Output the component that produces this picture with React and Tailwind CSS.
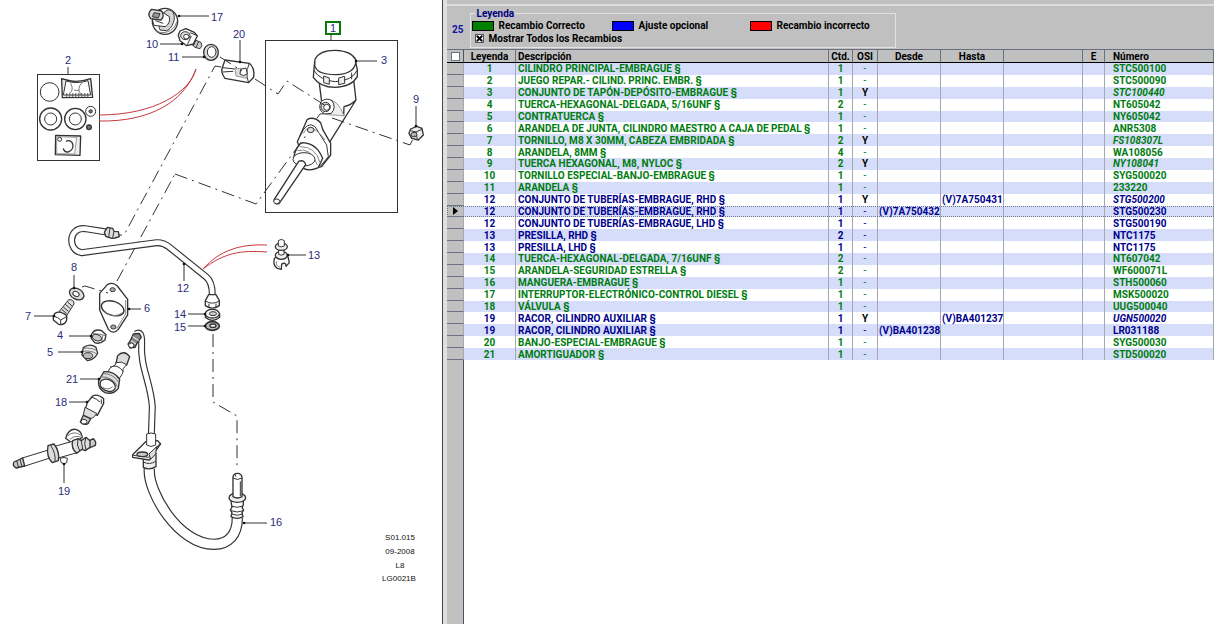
import { X } from 'lucide-react';
import clsx from 'clsx';

const parts = [
  { ref: '1', name: 'CILINDRO PRINCIPAL-EMBRAGUE §', qty: 1, number: 'STC500100' },
  { ref: '2', name: 'JUEGO REPAR.- CILIND. PRINC. EMBR. §', qty: 1, number: 'STC500090' },
  { ref: '3', name: 'CONJUNTO DE TAPÓN-DEPÓSITO-EMBRAGUE §', qty: 1, osi: true, number: 'STC100440' },
  { ref: '4', name: 'TUERCA-HEXAGONAL-DELGADA, 5/16UNF §', qty: 2, number: 'NT605042' },
  { ref: '5', name: 'CONTRATUERCA §', qty: 1, number: 'NY605042' },
  { ref: '6', name: 'ARANDELA DE JUNTA, CILINDRO MAESTRO A CAJA DE PEDAL §', qty: 1, number: 'ANR5308' },
  { ref: '7', name: 'TORNILLO, M8 X 30MM, CABEZA EMBRIDADA §', qty: 2, osi: true, number: 'FS108307L' },
  { ref: '8', name: 'ARANDELA, 8MM §', qty: 4, number: 'WA108056' },
  { ref: '9', name: 'TUERCA HEXAGONAL, M8, NYLOC §', qty: 2, osi: true, number: 'NY108041' },
  { ref: '10', name: 'TORNILLO ESPECIAL-BANJO-EMBRAGUE §', qty: 1, number: 'SYG500020' },
  { ref: '11', name: 'ARANDELA §', qty: 1, number: '233220' },
  { ref: '12', name: 'CONJUNTO DE TUBERÍAS-EMBRAGUE, RHD §', qty: 1, osi: true, to: '(V)7A750431', number: 'STG500200', optional: true },
  { ref: '12', name: 'CONJUNTO DE TUBERÍAS-EMBRAGUE, RHD §', qty: 1, from: '(V)7A750432', number: 'STG500230', optional: true, selected: true },
  { ref: '12', name: 'CONJUNTO DE TUBERÍAS-EMBRAGUE, LHD §', qty: 1, number: 'STG500190', optional: true },
  { ref: '13', name: 'PRESILLA, RHD §', qty: 2, number: 'NTC1175', optional: true },
  { ref: '13', name: 'PRESILLA, LHD §', qty: 1, number: 'NTC1175', optional: true },
  { ref: '14', name: 'TUERCA-HEXAGONAL-DELGADA, 7/16UNF §', qty: 2, number: 'NT607042' },
  { ref: '15', name: 'ARANDELA-SEGURIDAD ESTRELLA §', qty: 2, number: 'WF600071L' },
  { ref: '16', name: 'MANGUERA-EMBRAGUE §', qty: 1, number: 'STH500060' },
  { ref: '17', name: 'INTERRUPTOR-ELECTRÓNICO-CONTROL DIESEL §', qty: 1, number: 'MSK500020' },
  { ref: '18', name: 'VÁLVULA §', qty: 1, number: 'UUG500040' },
  { ref: '19', name: 'RACOR, CILINDRO AUXILIAR §', qty: 1, osi: true, to: '(V)BA401237', number: 'UGN500020', optional: true },
  { ref: '19', name: 'RACOR, CILINDRO AUXILIAR §', qty: 1, from: '(V)BA401238', number: 'LR031188', optional: true },
  { ref: '20', name: 'BANJO-ESPECIAL-EMBRAGUE §', qty: 1, number: 'SYG500030' },
  { ref: '21', name: 'AMORTIGUADOR §', qty: 1, number: 'STD500020' },
];

// label position, then the leader line from the label to the part
const callouts = [
  { n: '17', x: 211, y: 21, line: [209, 16, 179, 16] },
  { n: '10', x: 146, y: 48, line: [160, 44, 182, 44] },
  { n: '11', x: 168, y: 61, line: [182, 57, 204, 57] },
  { n: '20', x: 233, y: 38, line: [240, 40, 240, 62] },
  { n: '2', x: 65, y: 64, line: [68, 67, 68, 74], plain: true },
  { n: '1', x: 330, y: 32, line: [331, 34, 331, 40], plain: true },
  { n: '3', x: 381, y: 64, line: [377, 61, 356, 61] },
  { n: '9', x: 413, y: 103, line: [416, 106, 416, 126] },
  { n: '8', x: 71, y: 271, line: [74, 275, 74, 288] },
  { n: '7', x: 25, y: 320, line: [34, 316, 54, 316] },
  { n: '12', x: 177, y: 292, line: [184, 281, 184, 264] },
  { n: '6', x: 144, y: 312, line: [141, 309, 129, 309] },
  { n: '14', x: 174, y: 318, line: [188, 314, 205, 314] },
  { n: '15', x: 174, y: 331, line: [188, 326, 205, 326] },
  { n: '4', x: 57, y: 339, line: [69, 336, 91, 336] },
  { n: '5', x: 47, y: 356, line: [58, 352, 82, 352] },
  { n: '21', x: 66, y: 383, line: [80, 379, 99, 379] },
  { n: '18', x: 55, y: 406, line: [69, 402, 87, 402] },
  { n: '19', x: 58, y: 495, line: [64, 483, 64, 464] },
  { n: '13', x: 308, y: 259, line: [306, 255, 288, 255] },
  { n: '16', x: 270, y: 526, line: [267, 523, 244, 523] },
];

function Tube({ d, width }) {
  return (
    <>
      <path d={d} fill="none" stroke="#333" strokeWidth={width} />
      <path d={d} fill="none" stroke="#fff" strokeWidth={width - 7} />
    </>
  );
}

function Diagram() {
  return (
    <svg viewBox="0 0 442 624" className="w-full" role="img" aria-label="LG0021B">
      {/* assembly axes behind the parts */}
      <g fill="none" stroke="#333" strokeWidth="1" strokeDasharray="13 5 2 5">
        <path d="M221 67 L215 66 L124 235 L119 235" />
        <path d="M117 281 L175 174" />
        <path d="M213 334 L213 402 L237 416 L237 468" />
      </g>

      {/* frame of the master cylinder and of the repair kit */}
      <g fill="none" stroke="#333" strokeWidth="1">
        <rect x="265.500" y="40.500" width="132" height="172" />
        <rect x="37.500" y="74.500" width="62" height="86" />
      </g>

      {/* 17, 10, 11, 20 and the repair kit */}
      <g transform="scale(0.3333)" fill="#fff" stroke="#333" strokeWidth="3" strokeLinejoin="round">
        <ellipse cx="495" cy="64" rx="38" ry="39" strokeWidth="4" />
        <path d="M463 88 C475 104 520 103 530 65" fill="none" stroke="#777" />
        <path d="M480 90 C470 70 490 25 510 30 C535 40 520 85 500 92 Z" fill="#d4d4d4" />
        <path d="M485 35 L508 50 Q512 70 496 80 L462 76 L458 62 Z" />
        <path d="M455 28 L485 33 Q495 48 483 60 L452 56 Q440 42 455 28 Z" fill="#ddd" strokeWidth="4" />
        <path d="M462 38 L480 41 L475 54 L457 50 Z M466 62 L490 70" fill="#999" />
        <path d="M580 118 L603 127 Q610 138 600 146 L585 142 L572 130 Z" fill="#ccc" />
        <path d="M588 120 L580 138 M596 124 L588 142" />
        <path d="M540 93 L558 86 L583 97 L592 108 L580 132 L560 137 L540 122 L535 106 Z" strokeWidth="4" />
        <path d="M570 98 L590 106 M562 134 L574 108" fill="none" />
        <ellipse cx="556" cy="107" rx="14" ry="12" fill="#ddd" />
        <ellipse cx="559" cy="110" rx="8" ry="7" />
        <ellipse cx="633" cy="157" rx="22" ry="24" fill="#ddd" strokeWidth="4" />
        <ellipse cx="635" cy="156" rx="13" ry="16" />
        <path d="M675 180 L748 190 Q765 203 761 232 L746 248 L675 235 Q660 215 668 200 Z" strokeWidth="4" />
        <path d="M668 203 L705 207 M748 190 Q735 220 746 248 M668 216 L700 214" fill="none" />
        <path d="M705 205 L742 207 L740 235 L708 228 Z" fill="#ddd" stroke="#999" />
        <path d="M722 208 L738 204 L742 222 L730 227 L720 222 Z" />

        <circle cx="149" cy="276" r="28" />
        <path d="M185 236 L200 240 Q232 250 272 236 L278 292 L187 293 Z" fill="#eee" strokeWidth="4" />
        <path d="M190 285 L198 243 Q230 253 264 242 L272 285 Z" />
        <path d="M212 250 Q223 272 208 280 M246 248 Q230 265 242 283 M222 270 L237 272" fill="none" stroke="#777" />
        <path d="M198 285 H268" stroke="#666" strokeWidth="10" strokeDasharray="4 5" />
        <circle cx="152" cy="357" r="33" strokeWidth="4" />
        <circle cx="152" cy="357" r="18" />
        <circle cx="226" cy="357" r="32" strokeWidth="4" />
        <circle cx="226" cy="357" r="18" />
        <circle cx="272" cy="334" r="15" />
        <circle cx="272" cy="334" r="5" fill="#777" />
        <circle cx="267" cy="382" r="7" fill="#777" strokeWidth="4" />
        <path d="M167 406 L242 408 L240 466 L166 464 Z" fill="#eee" strokeWidth="4" />
        <path d="M170 410 L230 412 L224 462 L170 461 Z" stroke="#999" />
        <circle cx="179" cy="418" r="6" />
        <path d="M198 424 C220 414 228 448 205 456 Q192 457 190 445" fill="none" strokeWidth="4" />
      </g>

      {/* 3, 1 and 9 */}
      <g transform="translate(210 0) scale(0.3333)" fill="#fff" stroke="#333" strokeWidth="3" strokeLinejoin="round">
        <path d="M328 250 L335 305 L330 335 L300 370 L350 435 L400 355 L438 300 L439 245 Z" stroke="none" />
        <path d="M328 250 L335 305 M431 240 L438 300 L358 428 M438 300 Q422 316 402 320 L401 348" fill="none" strokeWidth="4" />
        <path d="M320 356 L330 342 L348 341" fill="none" />
        <path d="M314 185 L310 232 Q330 262 375 262 Q425 260 442 230 V210 L437 185 Z" strokeWidth="4" />
        <path d="M311 210 Q330 242 376 245 Q428 242 441 211" fill="none" />
        <path d="M341 228 V248 L358 253 V234 Z M386 234 V254 L404 250 V229 Z M425 218 V238" fill="#eee" />
        <path d="M315 178 Q328 150 378 151 Q425 153 438 180 Q438 222 378 224 Q318 224 314 195 Z" strokeWidth="4" />
        <path d="M350 299 Q384 296 402 348 L388 346 Q366 345 350 344 Z" fill="#eee" stroke="#999" />
        <path d="M334 304 Q350 292 366 302 Q380 322 364 340 L345 342 Q320 330 334 304 Z" />
        <circle cx="347" cy="321" r="14" fill="#ddd" />
        <circle cx="350" cy="322" r="9" />
        <path d="M292 358 Q312 348 332 368 L338 388 L362 430 V465 L335 500 L295 508 L262 425 Z" strokeWidth="4" />
        <path d="M270 408 Q292 360 315 380 L350 435 L355 470 L330 500" fill="none" />
        <path d="M280 400 Q300 360 345 420" fill="none" stroke="#888" />
        <ellipse cx="302" cy="390" rx="10" ry="8" fill="#ddd" />
        <path d="M278 428 Q320 430 338 475 L325 503 Q300 515 280 505 L252 480 Q250 455 270 432 Z" strokeWidth="4" />
        <path d="M262 452 Q302 440 322 495 M270 440 Q318 440 330 488" fill="none" stroke="#888" />
        <ellipse cx="282" cy="478" rx="33" ry="20" />
        <path d="M266 484 L192 600 Q194 615 207 611 L287 494 Q283 478 266 484 Z" strokeWidth="4" />
        <ellipse cx="200" cy="604" rx="9" ry="7" />
        <path d="M602 387 L620 379 L636 385 L640 405 L625 420 L605 415 L597 400 Z" fill="#eee" strokeWidth="4" />
        <path d="M602 392 L618 396 L636 388 M618 396 L622 418" fill="none" />
        <ellipse cx="612" cy="404" rx="9" ry="7" fill="#bbb" />
      </g>

      {/* 12, 8, 7, 6, 14, 15, 4, 5 and 21 */}
      <g transform="translate(0 200) scale(0.3333)" fill="#fff" stroke="#333" strokeWidth="3" strokeLinejoin="round">
        <Tube width={21} d="M325 97 L255 86 C205 80 202 152 245 158 L470 128 Q490 127 506 140 L618 230 Q638 246 637 288" />
        <path d="M322 82 L338 85 L342 94 L355 95 L358 110 L345 114 L336 115 L318 110 L313 97 Z" fill="#ddd" strokeWidth="4" />
        <path d="M330 84 L326 112 M342 94 L338 113" />
        <path d="M626 284 H648 L658 302 V317 Q637 332 616 317 V302 Z" strokeWidth="4" />
        <path d="M616 303 Q637 316 658 303 M627 311 V324 M648 311 V324" fill="none" />
        <path d="M616 341 V352 Q637 371 659 352 V341 Z" fill="#eee" strokeWidth="4" />
        <ellipse cx="637" cy="341" rx="21" ry="13" strokeWidth="4" />
        <ellipse cx="639" cy="341" rx="11" ry="6" fill="#ccc" />
        <ellipse cx="637" cy="378" rx="21" ry="13" fill="#bbb" strokeWidth="5" />
        <ellipse cx="639" cy="377" rx="9" ry="5" strokeWidth="4" />

        <path d="M206 299 Q223 298 222 312 L198 350 L178 334 Z" fill="#ddd" />
        <path d="M202 305 L216 318 M196 313 L211 326 M190 321 L205 334 M185 328 L200 341" />
        <path d="M165 340 Q180 330 200 347 V360 Q195 377 176 373 L160 360 V348 Z" strokeWidth="4" />
        <path d="M160 348 Q175 352 182 360 L200 350 M182 360 V372" fill="none" />
        <ellipse cx="230" cy="282" rx="23" ry="16" transform="rotate(28 230 282)" fill="#ddd" strokeWidth="4" />
        <ellipse cx="228" cy="282" rx="10" ry="7" transform="rotate(28 228 282)" />

        <path d="M322 254 Q338 245 352 258 L383 298 V345 L355 388 Q340 405 325 388 L299 330 V280 Z" strokeWidth="4" />
        <path d="M377 300 V342 L350 386" fill="none" stroke="#888" />
        <ellipse cx="338" cy="325" rx="35" ry="21" transform="rotate(18 338 325)" strokeWidth="4" />
        <path d="M310 334 Q340 358 368 338" fill="none" stroke="#777" />
        <ellipse cx="338" cy="269" rx="8" ry="6" fill="#aaa" />
        <ellipse cx="340" cy="381" rx="8" ry="6" fill="#aaa" />

        <path d="M275 402 Q285 385 305 392 L318 404 L315 420 Q300 434 284 428 L274 415 Z" strokeWidth="4" />
        <path d="M277 400 L300 403 L317 407 M308 406 L305 428" fill="none" stroke="#777" />
        <ellipse cx="291" cy="413" rx="14" ry="9" fill="#ccc" transform="rotate(20 291 413)" />
        <path d="M250 443 Q270 428 288 442 L293 460 Q283 480 262 482 L246 465 Z" fill="#eee" strokeWidth="4" />
        <path d="M250 445 Q275 442 290 452 M248 454 Q275 450 290 462" fill="none" stroke="#777" />
        <ellipse cx="264" cy="467" rx="14" ry="9" fill="#bbb" />

        <path d="M353 467 Q372 448 389 470 L380 495 L348 490 Z" fill="#ddd" strokeWidth="4" />
        <path d="M348 488 Q350 495 332 502 L320 522 L352 545 L368 520 Q365 505 380 494 Q365 482 348 488 Z" />
        <path d="M330 502 Q352 490 370 515" fill="none" />
        <path d="M312 515 Q342 512 359 538 L355 565 Q340 585 315 578 Q292 565 296 542 Z" fill="#ddd" strokeWidth="4" />
        <path d="M305 520 Q340 520 357 548 M300 530 Q340 530 352 560" fill="none" stroke="#777" />
        <ellipse cx="323" cy="556" rx="24" ry="17" transform="rotate(25 323 556)" strokeWidth="4" />
        <path d="M308 562 Q325 572 338 560" fill="none" stroke="#777" />
      </g>

      {/* 13 */}
      <g transform="translate(180 200) scale(0.3333)" fill="#fff" stroke="#333" strokeWidth="3" strokeLinejoin="round">
        <path d="M283 176 Q278 196 292 205 L304 208 L305 192 Q318 185 318 199 L328 188 L324 170 L290 168 Z" strokeWidth="4" />
        <path d="M290 184 Q285 196 300 202" fill="none" stroke="#888" />
        <ellipse cx="304" cy="166" rx="18" ry="12" fill="#eee" strokeWidth="4" />
        <path d="M296 146 H312 V163 Q304 168 296 163 Z" />
        <ellipse cx="304" cy="140" rx="18" ry="11" fill="#eee" strokeWidth="4" />
        <path d="M295 122 Q304 114 313 122 V138 Q304 143 295 138 Z" />
      </g>

      {/* 16 */}
      <g transform="translate(110 420) scale(0.3333)" fill="#fff" stroke="#333" strokeWidth="3" strokeLinejoin="round">
        <Tube width={34} d="M118 145 C112 215 205 373 312 373 C355 372 382 345 382 293" />
        <path d="M363 243 H400 V255 L396 262 L401 270 L396 278 L399 290 Q382 300 363 290 L366 278 L361 270 L366 262 Z" strokeWidth="4" />
        <path d="M364 258 Q382 266 398 258 M363 272 Q382 280 400 272 M365 282 Q382 290 398 282" fill="none" />
        <ellipse cx="382" cy="233" rx="25" ry="14" fill="#eee" strokeWidth="4" />
        <path d="M369 230 V172 Q370 160 382 160 Q395 160 396 172 V230 Q382 238 369 230 Z" strokeWidth="4" />
        <path d="M369 174 Q382 183 396 174 M374 162 L378 170 M391 184 V228" fill="none" />
      </g>

      {/* upper end of 16, 18 and 19 */}
      <g transform="translate(0 330) scale(0.3333)" fill="#fff" stroke="#333" strokeWidth="3" strokeLinejoin="round">
        <Tube width={21} d="M408 12 Q426 0 425 40 C420 110 453 160 457 230 L454 318" />
        <path d="M400 12 L418 10 L424 22 L412 38 L405 52 L390 54 L384 42 L392 30 Z" fill="#888" strokeWidth="4" />
        <path d="M398 20 L416 32 M393 32 L408 42" stroke="#fff" />
        <ellipse cx="394" cy="46" rx="8" ry="7" />
        <path d="M432 365 L468 370 V410 Q448 422 430 412 V392 Z" fill="#eee" strokeWidth="4" />
        <path d="M430 396 Q448 406 467 394" fill="none" />
        <path d="M437 335 L473 332 L482 342 L448 390 L398 382 L398 374 Z" strokeWidth="4" />
        <path d="M400 376 L446 382 L480 340" fill="none" />
        <path d="M447 372 L470 350 L467 372 L452 388 Z" fill="#ddd" />
        <ellipse cx="427" cy="373" rx="16" ry="7" fill="#ccc" strokeWidth="4" />
        <path d="M440 312 Q453 306 467 312 V345 Q453 354 440 345 Z" />

        <path d="M278 198 Q292 190 311 206 V220 L292 256 L256 238 L262 218 Z" strokeWidth="4" />
        <path d="M276 202 Q290 206 300 216 M304 208 V222" fill="none" />
        <path d="M255 232 L290 250 Q280 268 268 265 L250 255 Z" fill="#ddd" />
        <path d="M250 256 L272 266 L265 280 Q252 288 241 276 Z" fill="#ccc" strokeWidth="4" />
        <ellipse cx="252" cy="275" rx="9" ry="7" />

        <path d="M180 385 Q193 380 202 385 L200 398 Q192 405 184 398 Z" />
        <path d="M197 325 Q205 296 227 298 Q244 302 247 322 L220 342 Z" strokeWidth="4" />
        <path d="M203 318 Q222 300 243 316 M210 328 Q228 312 246 324" fill="none" stroke="#777" />
        <path d="M64 385 L145 360 L150 384 L72 409 Z" />
        <path d="M42 396 L68 384 L74 408 L48 414 Q36 406 42 396 Z" fill="#ccc" strokeWidth="4" />
        <path d="M50 393 L56 413 M60 388 L66 410" />
        <path d="M160 350 L218 334 L232 368 L168 386 Z" />
        <path d="M144 347 L162 342 Q180 365 175 392 L157 398 Q138 380 144 347 Z" fill="#ddd" strokeWidth="4" />
        <path d="M152 346 Q168 370 165 394" fill="none" />
        <path d="M268 332 L280 326 Q290 335 286 346 L268 354 Z" fill="#ccc" strokeWidth="4" />
        <path d="M218 332 L234 326 L244 332 L258 322 L270 332 L270 352 L256 362 L246 358 L230 370 Q212 355 218 332 Z" fill="#ddd" strokeWidth="4" />
        <path d="M234 326 Q228 345 240 364 M258 322 Q250 340 258 360 M244 332 L248 358" fill="none" />
      </g>

      {/* axes that run onto the parts */}
      <g fill="none" stroke="#333" strokeWidth="1" strokeDasharray="13 5 2 5">
        <path d="M175 174 L256 204 L307 134" />
        <path d="M220 57 L242 71" />
        <path d="M255 79 L278 94 L287 81 L326 106" />
        <path d="M332 118 L410 145 L415 135" />
        <path d="M82 287 L85 286 L108 293" />
      </g>

      {/* links from the kit and the clip to the pipe */}
      <g fill="none" stroke="#c8383c" strokeWidth="1">
        <path d="M99 115 C155 115 190 92 196 69" />
        <path d="M99 121 C150 122 184 102 196 69" />
        <path d="M203 269 C220 250 240 244 267 245" />
        <path d="M203 269 C224 253 240 250 267 252" />
      </g>

      <rect x="326" y="22" width="14" height="12" fill="none" stroke="#087808" strokeWidth="2" />

      <g className="font-['Liberation_Sans'] text-[11px]">
        {callouts.map(({ n, x, y, line, plain }) => (
          <g key={n}>
            <path d={`M${line[0]} ${line[1]} L${line[2]} ${line[3]}`} stroke="#333" strokeWidth="1" />
            {!plain && <circle cx={line[2]} cy={line[3]} r="1.3" fill="#111" />}
            <text x={x} y={y} fill="#2c2c7c">{n}</text>
          </g>
        ))}
      </g>

      <g className="font-['Liberation_Sans'] text-[8px]" fill="#111" textAnchor="middle">
        <text x="400" y="540">S01.015</text>
        <text x="400" y="554">09-2008</text>
        <text x="400" y="568">L8</text>
        <text x="399" y="581">LG0021B</text>
      </g>
    </svg>
  );
}

function Swatch({ color, children }) {
  return (
    <span className="flex items-center gap-1">
      <span className={clsx('h-2.5 w-[22px] border border-black', color)} />
      {children}
    </span>
  );
}

function Legend() {
  return (
    <div className="flex h-[45px] items-center gap-[7px] border-t-2 border-[#dcdcdc] pl-[5px]">
      <span className="pt-1 text-[#1414a0]">25</span>
      <fieldset className="flex h-[40px] w-[426px] flex-col gap-px border border-[#e2e2e2]">
        <legend className="ml-1 px-px leading-3 text-[#000080]">Leyenda</legend>
        <div className="grid grid-cols-[140px_138px_1fr] pl-px leading-3">
          <Swatch color="bg-[#008000]">Recambio Correcto</Swatch>
          <Swatch color="bg-[#0000ff]">Ajuste opcional</Swatch>
          <Swatch color="bg-[#ff0000]">Recambio incorrecto</Swatch>
        </div>
        <label className="ml-1 flex items-center gap-1 leading-3">
          <span className="grid">
            <input type="checkbox" defaultChecked className="peer col-start-1 row-start-1 size-[9px] appearance-none border border-gray-600 bg-white" />
            <X className="pointer-events-none invisible col-start-1 row-start-1 size-[9px] peer-checked:visible" strokeWidth={5} />
          </span>
          Mostrar Todos los Recambios
        </label>
      </fieldset>
    </div>
  );
}

const headers = ['Leyenda', 'Descripción', 'Ctd.', 'OSI', 'Desde', 'Hasta', '', 'E', 'Número'];

function PartsTable() {
  return (
    <table className="h-[311px] w-full table-fixed border-separate border-spacing-0 leading-[10px]">
      <colgroup>
        <col className="w-[17px]" />
        <col className="w-[52px]" />
        <col className="w-[313px]" />
        <col className="w-[24px]" />
        <col className="w-[25px]" />
        <col className="w-[63px]" />
        <col className="w-[63px]" />
        <col className="w-[79px]" />
        <col className="w-[22px]" />
        <col />
      </colgroup>
      <thead>
        <tr className="h-[14px] bg-[#c0c0c0]">
          <th className="border-y border-r border-t-gray-500 border-r-gray-600 border-b-black">
            <input type="checkbox" aria-label="Todos" className="mx-auto block size-[9px] appearance-none border border-gray-500 bg-white" />
          </th>
          {headers.map((title, i) => (
            <th
              key={i}
              className={clsx(
                'border-y border-r border-t-gray-500 border-r-gray-500 border-b-black pt-px font-bold',
                title === 'Descripción' && 'pl-0.5 text-left',
                title === 'Número' && 'pl-2 text-left'
              )}
            >
              {title}
            </th>
          ))}
        </tr>
      </thead>
      <tbody>
        {parts.map((part, i) => (
          <tr
            key={i}
            className={clsx(
              'odd:bg-[#d5ddfb] [&>td]:border-r [&>td]:border-r-[#a3a7b8] [&>td]:pt-px',
              part.optional ? 'text-[#00008c]' : 'text-[#007c10]',
              part.selected && 'outline outline-dotted -outline-offset-1 outline-[#707890]'
            )}
          >
            <td className="border-b border-b-gray-500 bg-[#c0c0c0]">
              {part.selected && (
                <svg viewBox="0 0 5 8" className="mx-auto block h-2 w-[5px]">
                  <path d="M0 0 L5 4 L0 8 Z" fill="#000" />
                </svg>
              )}
            </td>
            <td className="text-center">{part.ref}</td>
            <td className="pl-0.5 whitespace-nowrap">{part.name}</td>
            <td className="text-center">{part.qty}</td>
            <td className={clsx('text-center', part.osi ? 'text-black' : 'font-normal')}>{part.osi ? 'Y' : '-'}</td>
            <td className="pl-px whitespace-nowrap">{part.from}</td>
            <td className="pl-px whitespace-nowrap">{part.to}</td>
            <td />
            <td />
            <td className={clsx('pl-2', part.osi && 'italic')}>{part.number}</td>
          </tr>
        ))}
      </tbody>
    </table>
  );
}

export default function App() {
  return (
    <div className="flex min-h-screen bg-white">
      <section className="w-[442px] shrink-0">
        <Diagram />
      </section>
      <main className="flex min-w-0 flex-1 flex-col border-l border-[#444] font-[Roboto,sans-serif] text-[10px] font-bold">
        <div className="flex flex-1 border-l-4 border-[#e0e0e0]">
          <div className="flex min-w-0 flex-1 flex-col">
            <header className="bg-[#c0c0c0] pt-1">
              <Legend />
            </header>
            <PartsTable />
            <div className="w-[17px] flex-1 border-r border-gray-600 bg-[#c0c0c0]" />
          </div>
        </div>
      </main>
    </div>
  );
}
